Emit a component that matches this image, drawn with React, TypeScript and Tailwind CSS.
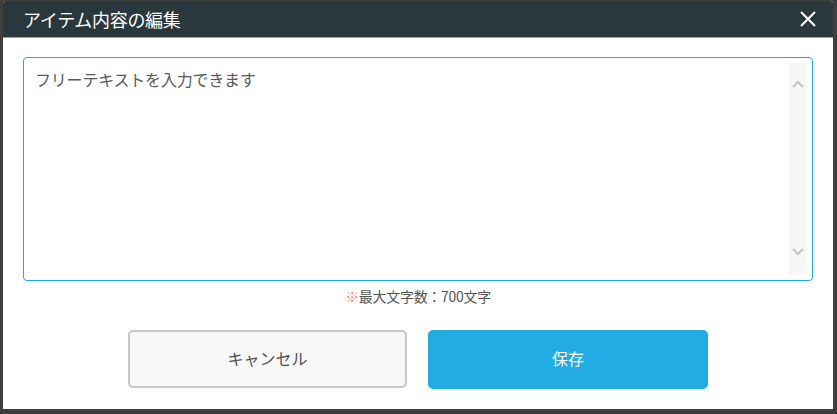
import * as React from "react";

const font = { fontFamily: '"Noto Sans CJK JP", "Noto Sans", sans-serif' };

function ScrollArrow({ up }: { up?: boolean }) {
  return (
    <svg width="12" height="8" viewBox="0 0 12 8" className="block">
      <path
        d={up ? "M1 7 L6 2 L11 7" : "M1 1 L6 6 L11 1"}
        fill="none"
        stroke="#c4c4c4"
        strokeWidth="2.2"
      />
    </svg>
  );
}

export default function App() {
  const [text, setText] = React.useState("");

  return (
    <div className="w-[837px] h-[414px] bg-[#3e3e3e] pt-[1px] pl-[3px] overflow-hidden" style={font}>
      <div className="w-[830px] h-[408px] bg-white rounded-t-[3px] flex flex-col overflow-hidden">
        {/* Header */}
        <div className="h-[37px] shrink-0 bg-[#2a373d] border-b border-[#9ea3a5] flex items-center justify-between pl-[20px] pr-[16px]">
          <h1 className="text-[18px] text-white leading-none tracking-[-0.3px]">アイテム内容の編集</h1>
          <button className="text-white">
            <svg width="18" height="18" viewBox="0 0 18 18">
              <path d="M2 2 L16 16 M16 2 L2 16" stroke="white" strokeWidth="2" />
            </svg>
          </button>
        </div>

        {/* Body */}
        <div className="flex flex-col px-[20px] pt-[19px]">
          <div className="relative h-[224px] border border-[#1eaae3] rounded-[4px]">
            <textarea
              value={text}
              onChange={(e) => setText(e.target.value)}
              placeholder="フリーテキストを入力できます"
              className="w-full h-full resize-none outline-none bg-transparent pl-[11px] pr-[30px] pt-[9px] text-[16px] text-[#555] placeholder:text-[#5a5a5a] leading-[24px] tracking-[-0.2px]"
            />
            <div className="absolute right-[6px] top-[5px] bottom-[5px] w-[17px] bg-[#f6f6f6] flex flex-col items-center justify-between pt-[17px] pb-[19px]">
              <ScrollArrow up />
              <ScrollArrow />
            </div>
          </div>

          <p className="mt-[5px] text-center text-[14px] leading-[20px] text-[#555] tracking-[-0.3px]">
            <span className="text-[#f08a84]">※</span>最大文字数：700文字
          </p>

          <div className="mt-[24px] flex justify-center gap-[21px]">
            <button className="w-[279px] h-[58px] pb-[3px] rounded-[5px] border-2 border-[#c8c8c8] bg-[#f8f8f8] text-[16px] text-[#505050]">
              キャンセル
            </button>
            <button className="w-[280px] h-[59px] pb-[3px] rounded-[5px] bg-[#21ade3] text-[16px] text-white">
              保存
            </button>
          </div>
        </div>
      </div>
    </div>
  );
}
